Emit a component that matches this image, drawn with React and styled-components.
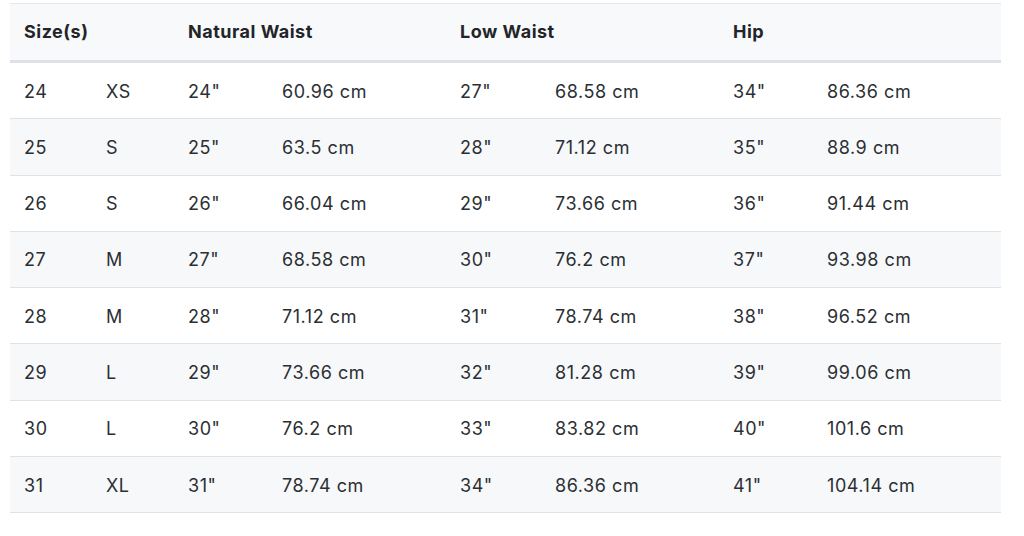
import React from 'react';
import styled, { createGlobalStyle } from 'styled-components';

const GlobalStyle = createGlobalStyle`
  body {
    margin: 0;
    background: #ffffff;
    font-family: Inter, "Noto Sans", "Liberation Sans", sans-serif;
  }
`;

const Wrapper = styled.div`
  padding: 3px 0 0 10px;
`;

const Table = styled.table`
  width: 991px;
  border-collapse: collapse;
  table-layout: fixed;
  color: #212529;
  font-size: 18px;
  line-height: 27px;
`;

const HeadCell = styled.th`
  text-align: left;
  font-weight: 700;
  padding: 14px 14px 15px;
  background: #f8f9fa;
  border-top: 1px solid #e6e8eb;
  border-bottom: 3px solid #dee2e6;
  letter-spacing: 0.5px;
`;

const Row = styled.tr`
  background: ${(p) => (p.$striped ? '#f7f8fa' : '#ffffff')};
  border-bottom: 1px solid #dfe2e6;
`;

const Cell = styled.td`
  padding: 14.6px 14px 13.7px;
  height: 27px;
  color: #2b2f33;
  white-space: nowrap;
  letter-spacing: 0.55px;
`;

const widths = [82, 82, 94, 178, 95, 178, 94, 188];

const rows = [
  ['24', 'XS', '24"', '60.96 cm', '27"', '68.58 cm', '34"', '86.36 cm'],
  ['25', 'S', '25"', '63.5 cm', '28"', '71.12 cm', '35"', '88.9 cm'],
  ['26', 'S', '26"', '66.04 cm', '29"', '73.66 cm', '36"', '91.44 cm'],
  ['27', 'M', '27"', '68.58 cm', '30"', '76.2 cm', '37"', '93.98 cm'],
  ['28', 'M', '28"', '71.12 cm', '31"', '78.74 cm', '38"', '96.52 cm'],
  ['29', 'L', '29"', '73.66 cm', '32"', '81.28 cm', '39"', '99.06 cm'],
  ['30', 'L', '30"', '76.2 cm', '33"', '83.82 cm', '40"', '101.6 cm'],
  ['31', 'XL', '31"', '78.74 cm', '34"', '86.36 cm', '41"', '104.14 cm'],
];

const App = () => (
  <Wrapper>
    <GlobalStyle />
    <Table>
      <colgroup>
        {widths.map((w, i) => (
          <col key={i} style={{ width: w }} />
        ))}
      </colgroup>
      <thead>
        <tr>
          <HeadCell colSpan={2}>Size(s)</HeadCell>
          <HeadCell colSpan={2}>Natural Waist</HeadCell>
          <HeadCell colSpan={2}>Low Waist</HeadCell>
          <HeadCell colSpan={2}>Hip</HeadCell>
        </tr>
      </thead>
      <tbody>
        {rows.map((r, i) => (
          <Row key={i} $striped={i % 2 === 1}>
            {r.map((c, j) => (
              <Cell key={j}>{c}</Cell>
            ))}
          </Row>
        ))}
      </tbody>
    </Table>
  </Wrapper>
);

export default App;
